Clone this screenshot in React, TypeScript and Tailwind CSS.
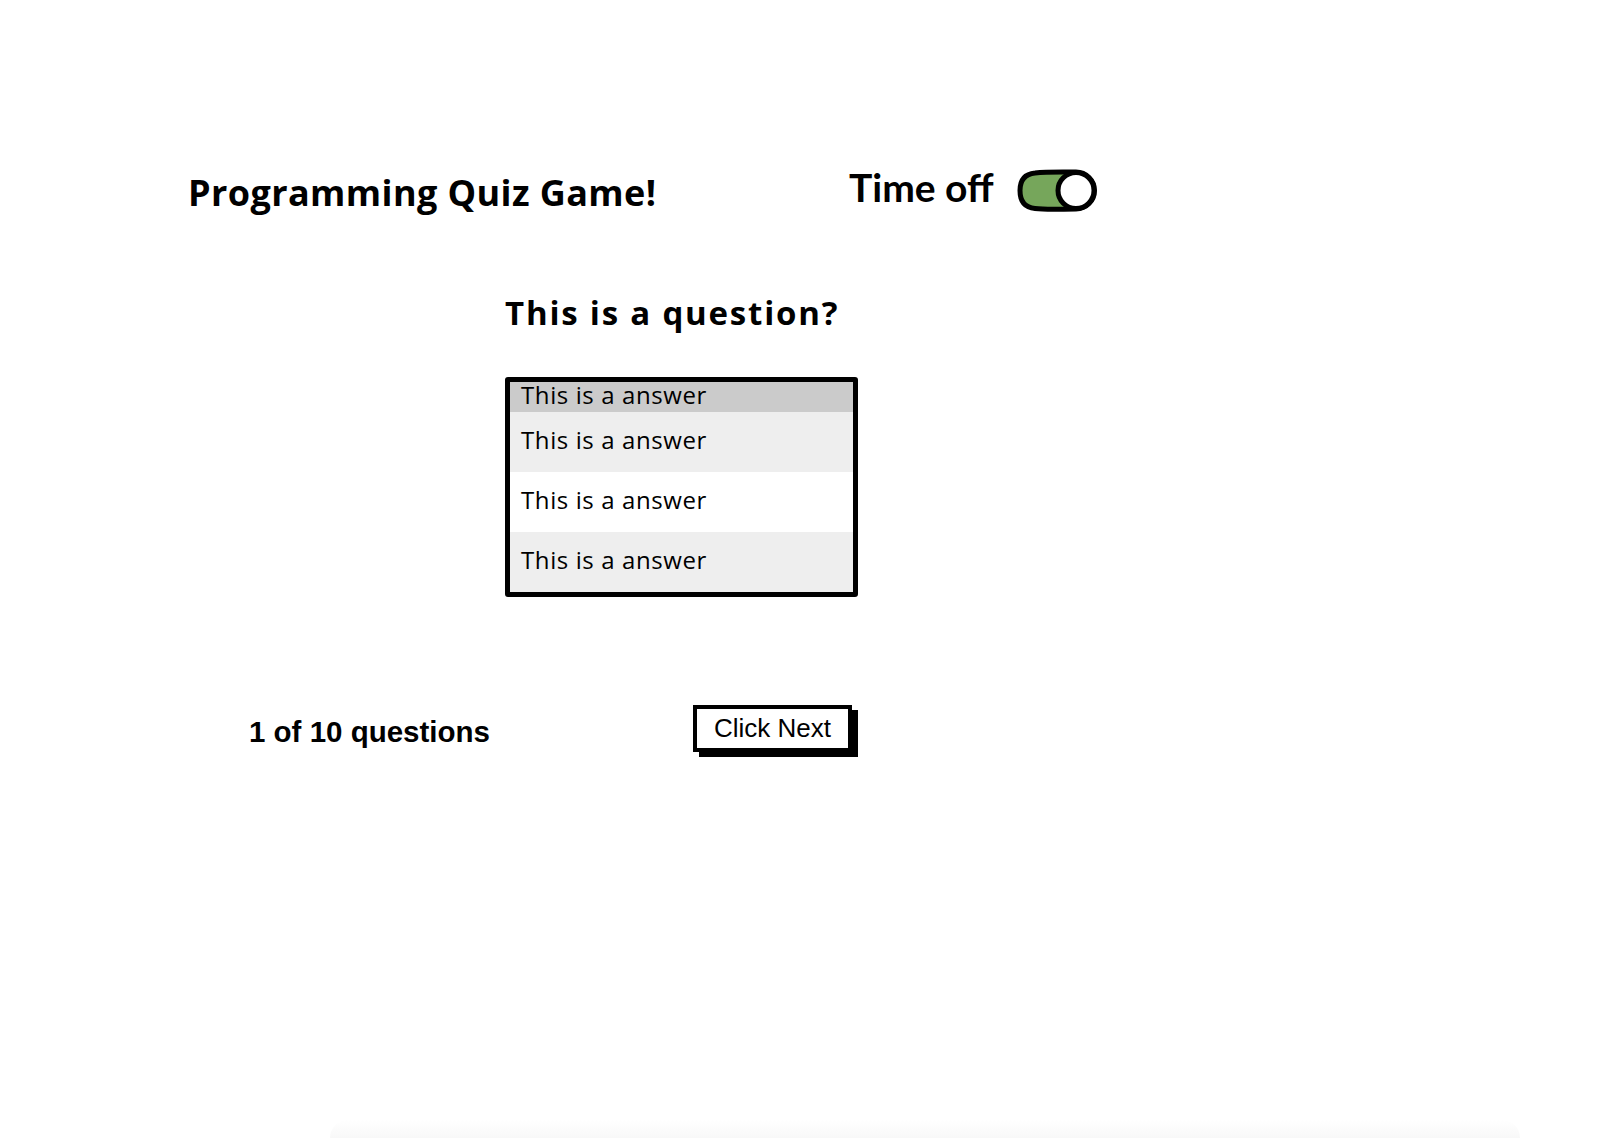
import React from "react";

const lato = { fontFamily: "Lato, 'Noto Sans', sans-serif" } as React.CSSProperties;
const open = { fontFamily: "'Open Sans', 'Noto Sans', sans-serif" } as React.CSSProperties;
const arial = { fontFamily: "'Liberation Sans', Arial, sans-serif" } as React.CSSProperties;

function Toggle() {
  return (
    <svg width="80" height="45" viewBox="0 0 80 45" className="block">
      <path
        d="M18 5 C30 3.5 48 4 59 4 A18.5 18.5 0 0 1 59 41 C45 41 30 42 18 40.5 C7 39.5 3 33 3 22.5 C3 12 8 6 18 5 Z"
        fill="#76a65b"
        stroke="#000"
        strokeWidth="5"
        strokeLinejoin="round"
      />
      <circle cx="59" cy="22.5" r="18" fill="#fff" stroke="#000" strokeWidth="5" />
    </svg>
  );
}

export default function App() {
  const answers = [
    { bg: "bg-[#cbcbcb]", h: "h-[30px]" },
    { bg: "bg-[#eeeeee]", h: "h-[60px]" },
    { bg: "bg-white", h: "h-[60px]" },
    { bg: "bg-[#eeeeee]", h: "h-[60px]" },
  ];
  return (
    <div className="flex h-[1138px] w-full flex-col overflow-hidden bg-white text-black">
      {/* header */}
      <div className="flex items-start pl-[188px] pt-[164px]">
        <div
          className="mt-[8px] w-[661px] text-[36px] font-bold leading-[42px] tracking-[0.4px]"
          style={open}
        >
          Programming Quiz Game!
        </div>
        <div className="text-[39px] font-bold leading-[47px]" style={lato}>
          Time off
        </div>
        <div className="ml-[23px] mt-[4px]">
          <Toggle />
        </div>
      </div>

      {/* question */}
      <div
        className="mt-[80px] pl-[505px] text-[33px] font-bold leading-[38px] tracking-[1.8px]"
        style={open}
      >
        This is a question?
      </div>

      {/* answers */}
      <div className="ml-[505px] mt-[45px] w-[353px] rounded-[3px] border-[5px] border-black">
        {answers.map((a, i) => (
          <div
            key={i}
            className={`flex items-center pb-[4px] pl-[11px] text-[24px] leading-none tracking-[0.6px] ${a.bg} ${a.h}`}
            style={open}
          >
            This is a answer
          </div>
        ))}
      </div>

      {/* footer */}
      <div className="mt-[108px] flex items-start pl-[249px]">
        <div className="mt-[10px] w-[444px] text-[29.5px] font-bold leading-[34px]" style={arial}>
          1 of 10 questions
        </div>
        <div
          className="flex h-[47px] w-[159px] items-center justify-center border-[4px] border-black bg-white text-[26px] shadow-[6px_5px_0_#000]"
          style={arial}
        >
          Click Next
        </div>
      </div>

      <div className="mt-auto ml-[330px] h-[18px] w-[1190px] rounded-t-[40px] bg-gradient-to-b from-white to-[#f8f8f8]" />
    </div>
  );
}
